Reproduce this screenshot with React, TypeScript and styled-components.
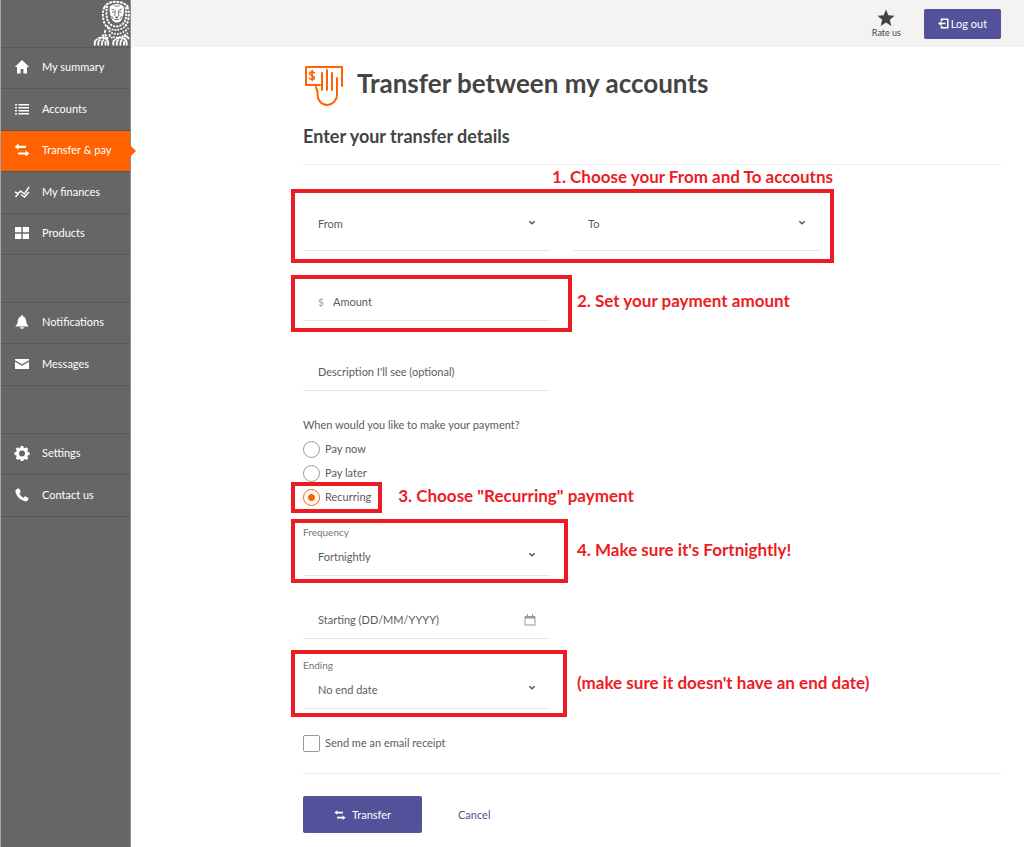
import React from "react";
import styled, { createGlobalStyle } from "styled-components";

const family = `Lato, "Open Sans", sans-serif`;
const orange = "#ff6200";
const indigo = "#525199";
const red = "#ed1c24";

const GlobalStyle = createGlobalStyle`
  *, *::before, *::after { box-sizing: border-box; }
  body {
    margin: 0;
    background: #fff;
    color: #5c5c5c;
    font: 11px/16px ${family};
  }
  button, input, select { font: inherit; color: inherit; }
`;

const Shell = styled.div`
  display: flex;
  min-height: 100vh;
`;

const Sidebar = styled.aside`
  flex: 0 0 131px;
  background: #666;
  border-left: 1px solid #a6a6a6;
  border-right: 1px solid #8f8f8f;
`;

const LogoBar = styled.div`
  height: 48px;
  display: flex;
  justify-content: flex-end;
  align-items: flex-start;
  border-bottom: 1px solid #575757;
`;

const NavGroup = styled.ul`
  list-style: none;
  margin: 0 0 47px;
  padding: 0;
  & + & { border-top: 1px solid #575757; }
`;

const NavItem = styled.li`
  height: 41px;
  border-bottom: 1px solid #575757;
  &:nth-child(even) { height: 42px; }
`;

const NavLink = styled.a<{ $active?: boolean }>`
  position: relative;
  display: flex;
  align-items: center;
  gap: 12px;
  height: 100%;
  padding: 0 0 2px 13px;
  color: #fff;
  text-decoration: none;
  background: ${(p) => (p.$active ? orange : "transparent")};
  &::after {
    content: "";
    display: ${(p) => (p.$active ? "block" : "none")};
    position: absolute;
    left: 100%;
    top: 50%;
    margin-top: -6px;
    border: 6px solid transparent;
    border-left-color: ${orange};
    border-right-width: 0;
  }
`;

const Page = styled.div`
  flex: 1;
  min-width: 0;
`;

const TopBar = styled.header`
  display: flex;
  justify-content: flex-end;
  align-items: center;
  gap: 23px;
  height: 47px;
  padding-right: 23px;
  background: #f3f3f3;
`;

const RateLink = styled.a`
  display: flex;
  flex-direction: column;
  align-items: center;
  color: #444;
  font-size: 9px;
  line-height: 12px;
  text-decoration: none;
`;

const Button = styled.button<{ $size: "small" | "large" }>`
  display: inline-flex;
  align-items: center;
  justify-content: center;
  gap: ${(p) => (p.$size === "large" ? 6 : 2)}px;
  width: ${(p) => (p.$size === "large" ? 119 : 77)}px;
  height: ${(p) => (p.$size === "large" ? 37 : 30)}px;
  padding: 0;
  border: 0;
  border-radius: 2px;
  background: ${indigo};
  color: #fff;
  cursor: pointer;
`;

const Content = styled.main`
  padding: 16px 23px 14px 172px;
`;

const TitleRow = styled.div`
  display: flex;
  align-items: center;
  gap: 14px;
  height: 44px;
`;

const Title = styled.h1`
  margin: 0;
  padding-bottom: 5px;
  color: #444;
  font: 700 26px/32px ${family};
`;

const Subtitle = styled.h2`
  margin: 17px 0 16px;
  color: #444;
  font: 700 18px/24px ${family};
`;

const Rule = styled.hr`
  margin: 0;
  border: 0;
  border-top: 1px solid #ececec;
`;

const FieldPair = styled.div`
  position: relative;
  display: grid;
  grid-template-columns: repeat(2, 247px);
  gap: 23px;
  width: max-content;
  margin: 33px 0 32px;
`;

const FieldSlot = styled.div<{ $gap: number }>`
  position: relative;
  width: 247px;
  margin-bottom: ${(p) => p.$gap}px;
`;

const FieldLabel = styled.label`
  display: block;
  color: #767676;
  font-size: 10px;
  line-height: 12px;
`;

const Line = styled.div<{ $tall?: boolean }>`
  display: flex;
  align-items: center;
  height: ${(p) => (p.$tall ? 53 : 38)}px;
  padding: 0 14px 0 15px;
  border-bottom: 1px solid #e6e6e6;
`;

const Select = styled.select`
  flex: 1;
  min-width: 0;
  padding: 0;
  border: 0;
  background: transparent;
  appearance: none;
  outline: 0;
`;

const TextInput = styled.input`
  flex: 1;
  min-width: 0;
  padding: 0;
  border: 0;
  background: transparent;
  outline: 0;
  &::placeholder { color: #5c5c5c; opacity: 1; }
`;

const Currency = styled.span`
  width: 15px;
  color: #999;
  font-size: 10px;
`;

const Choices = styled.fieldset`
  margin: 0 0 17px;
  padding: 0;
  border: 0;
`;

const Legend = styled.legend`
  padding: 0;
  margin-bottom: 4px;
`;

const Choice = styled.label`
  position: relative;
  display: flex;
  align-items: center;
  gap: 5px;
  width: max-content;
  height: 24px;
`;

const Radio = styled.input`
  appearance: none;
  width: 17px;
  height: 17px;
  margin: 0;
  border: 1px solid #999;
  border-radius: 50%;
  background: #fff;
  &:checked {
    border-color: ${orange};
    background: radial-gradient(circle, ${orange} 3px, #fff 4px);
  }
`;

const Checkbox = styled.input`
  appearance: none;
  width: 17px;
  height: 17px;
  margin: 0;
  border: 1px solid #999;
  border-radius: 2px;
  background: #fff;
`;

const Footer = styled.footer`
  margin-top: 18px;
`;

const Actions = styled.div`
  display: flex;
  align-items: center;
  gap: 36px;
  margin-top: 22px;
`;

const CancelLink = styled.a`
  color: ${indigo};
  text-decoration: none;
`;

const Highlight = styled.div<{ $top: number; $right: number; $bottom: number }>`
  position: absolute;
  top: -${(p) => p.$top}px;
  right: -${(p) => p.$right}px;
  bottom: -${(p) => p.$bottom}px;
  left: -12px;
  border: 4px solid ${red};
  pointer-events: none;
`;

const Note = styled.span<{ $above?: boolean }>`
  position: absolute;
  ${(p) =>
    p.$above
      ? "right: -13px; bottom: 100%; margin-bottom: 9px;"
      : "left: 100%; top: 50%; margin: -13px 0 0 27px;"}
  color: ${red};
  font: 700 17px/24px ${family};
  white-space: nowrap;
`;

const Icon = ({ children, size = 16 }: { children: React.ReactNode; size?: number }) => (
  <svg width={size} height={size} viewBox="0 0 16 16" fill="currentColor" aria-hidden="true">
    {children}
  </svg>
);

const SwapShape = () => (
  <path d="M.5 4.800 4.500 1.800v1.900H12v2.200H4.500v1.900zM15.500 11.500l-4 3v-1.900H4v-2.200h7.500V8.500z" />
);

const icons = {
  home: <path d="M8 1 .8 8H3v6.500h3.600V10h2.800v4.500H13V8h2.200z" />,
  list: <path d="M1 3h2v1.500H1zM4.500 3H15v1.500H4.500zM1 6h2v1.500H1zM4.500 6H15v1.500H4.500zM1 9h2v1.500H1zM4.500 9H15v1.500H4.500zM1 12h2v1.500H1zM4.500 12H15v1.500H4.500z" />,
  swap: <SwapShape />,
  chart: (
    <g fill="none" stroke="currentColor" strokeWidth="1.500">
      <path d="m1.500 13 5-6 4 3 4.500-7" />
      <path d="m1 8 3 1.500M7 10.500l3.500 2.500L15 8" />
    </g>
  ),
  grid: <path d="M1 2h6.300v5.300H1zM8.700 2H15v5.300H8.700zM1 8.700h6.300V14H1zM8.700 8.700H15V14H8.700z" />,
  bell: <path d="M8 1.200c.8 0 1.200.5 1.200 1.200 2 .6 2.800 2.300 3 4.600.2 2.600.8 3.800 2.600 5.500H1.200C3 10.800 3.600 9.600 3.800 7c.2-2.300 1-4 3-4.600 0-.7.400-1.200 1.200-1.200zM6 13.200h4c-.2 1-1 1.600-2 1.600s-1.800-.6-2-1.600z" />,
  mail: <path d="M1 3h14v1.300L8 8.300 1 4.300zM1 5.700l7 4 7-4V13H1z" />,
  gear: (
    <path fillRule="evenodd" d="m6.700 1h2.600l.4 1.800 1.200.5 1.600-1 1.800 1.800-1 1.600.5 1.200 1.800.4v2.600l-1.800.4-.5 1.200 1 1.600-1.800 1.800-1.600-1-1.200.5-.4 1.800H6.700l-.4-1.800-1.200-.5-1.600 1-1.800-1.800 1-1.600-.5-1.200L.5 9.900V7.300l1.700-.4.5-1.200-1-1.600 1.800-1.800 1.600 1 1.200-.5zM8 5.400a3 3 0 1 0 0 6 3 3 0 0 0 0-6z" />
  ),
  phone: <path d="M2.300 2.600 4 1.500c.5-.3 1-.1 1.300.4l1.300 2.300c.2.500.1.900-.3 1.200l-1 .8c.8 2 2.300 3.600 4.300 4.500l.9-1c.3-.4.8-.4 1.200-.2l2.300 1.300c.5.300.6.800.4 1.300l-1 1.600c-.5.7-1.500.8-2.500.5C6 12.900 2.600 9.400 1.500 5c-.2-1 .1-1.900.8-2.400z" />,
};

type IconName = keyof typeof icons;

const ChevronMark = styled.svg`
  margin-bottom: 3px;
`;

const Chevron = () => (
  <ChevronMark width="8" height="6" viewBox="0 0 8 6" fill="none" stroke="#555" strokeWidth="1.500" aria-hidden="true">
    <path d="m1.300 1.200 2.700 2.500 2.700-2.500" />
  </ChevronMark>
);

const CalendarIcon = () => (
  <svg width="12" height="12" viewBox="0 0 12 12" fill="none" stroke="#999" aria-hidden="true">
    <path d="M1 2.500h10v8.500H1z" />
    <path d="M1 3.500h10" strokeWidth="2" />
    <path d="M3.500 0v2M8.500 0v2" />
  </svg>
);

const LionLogo = () => (
  <svg width="37" height="46" viewBox="0 0 37 46" fill="none" stroke="#fff" role="img" aria-label="Lion">
    <path d="M11.500 8C13 0 31 0 35 7" strokeWidth="2" strokeDasharray="2.800 .8" />
    <path d="M11.500 7c-2 4-2 9-1 13 .8 4 2.500 7 6 9M34.500 7c1.500 4 1.500 8 1 12-.5 3-2 6-4 8" strokeWidth="2" strokeDasharray="2.400 1.200" />
    <path d="M14.500 6c-1.500 4-1.500 11 .5 15 2 4 5 5.500 8.500 5.500s6.500-2 8.500-5.500c1.500-3 1.500-10 .5-15" strokeWidth="2" strokeDasharray="2.200 1" />
    <path d="M14 25.500c3 4 6 4.500 9.500 4.500s8-2 10.500-6M16 30.500c3 3 5 3.500 8 3.500s8-2 11.500-6M20 37c4 1.500 10 0 15-4" strokeWidth="1.800" strokeDasharray="1.800 1.200" />
    <path d="M17 6.500c1.500-3.500 12-3.500 13.500 0 1.300 4-.1 10.500-2.800 14.500-2 2-5.500 2-7.700 0C17.300 17 15.800 10.500 17 6.500z" fill="#fff" stroke="none" />
    <g stroke="#666" strokeWidth=".9">
      <path d="m18.500 9 3 1.200M29 9l-3 1.200M19 12h2.500M26 12h2.500M22.300 10.500l-.6 5.500M25.200 10.500l.6 5.500M18.500 16l2 3M29 16l-2 3M21.500 19.500h4.500" />
      <path d="M22.300 17h3l-1.500 1.300z" fill="#666" />
      <path d="M21 5.500c1.500 1 4 1 5.500 0" />
    </g>
    <g strokeWidth="1.800">
      <path d="M12.500 30c-1.500 3 0 6 3 8M16.500 34c0 2 1 3 3 4M9.500 34.500c1 2 3 3.500 5.500 4.500" strokeDasharray="3 1" />
      <path d="M2 45.500c-1-4 1-6 3-6.500M5.500 45.500c-.8-3 .2-5 2-6M9 45.500c-.5-3 .2-5 2-6M12.500 45.500v-4.500M5 38.500c3-1.500 8-1 9.500 2 .8 1.500.8 3.500.5 5" />
      <path d="M20.500 45.500c-1-4 1-6 3-6.500M24 45.500c-.8-3 .2-5 2-6M27.500 45.500c-.5-3 .2-5 2-6M31 45.500v-4.500M23.500 38.500c3-1.500 8-1 9.500 2 .8 1.500.8 3.500.5 5M31 36c2 0 4 1 5 3" />
    </g>
  </svg>
);

const HandCashIcon = () => (
  <svg width="40" height="44" viewBox="0 0 40 44" fill="none" stroke={orange} strokeWidth="2" strokeLinejoin="round" strokeLinecap="round" aria-hidden="true">
    <path d="M17 22H3V4h36v19" />
    <path d="M19 10v17M24 7v20M29 10v17" />
    <path d="M34 15v17c0 5-4.500 10-10 10S14.500 37 14.500 32v-3c0-2-1.500-3-1.500-5" />
    <path d="M11.500 9.800C10 8.600 6.500 8.800 6.800 11c.3 2 4.600 1.400 4.600 3.700 0 2-3.400 2.200-5 .8M9.200 7.500v10" strokeWidth="1.600" />
  </svg>
);

const LogoutIcon = () => (
  <svg width="11" height="11" viewBox="0 0 11 11" aria-hidden="true">
    <path d="M3.500 3V1.200h6.300v8.600H3.500V8" fill="none" stroke="currentColor" strokeWidth="1.500" />
    <path d="M0 5.500 3.500 3v1.700H7.500v1.600H3.500V8z" fill="currentColor" />
  </svg>
);

const navGroups: { label: string; icon: IconName; active?: boolean }[][] = [
  [
    { label: "My summary", icon: "home" },
    { label: "Accounts", icon: "list" },
    { label: "Transfer & pay", icon: "swap", active: true },
    { label: "My finances", icon: "chart" },
    { label: "Products", icon: "grid" },
  ],
  [
    { label: "Notifications", icon: "bell" },
    { label: "Messages", icon: "mail" },
  ],
  [
    { label: "Settings", icon: "gear" },
    { label: "Contact us", icon: "phone" },
  ],
];

const SelectLine = ({ id, option, tall, name }: { id: string; option: string; tall?: boolean; name?: string }) => (
  <Line $tall={tall}>
    <Select id={id} aria-label={name}>
      <option>{option}</option>
    </Select>
    <Chevron />
  </Line>
);

export default function App() {
  return (
    <>
      <GlobalStyle />
      <Shell>
        <Sidebar>
          <LogoBar>
            <LionLogo />
          </LogoBar>
          <nav>
            {navGroups.map((group, i) => (
              <NavGroup key={i}>
                {group.map((item) => (
                  <NavItem key={item.label}>
                    <NavLink href="#" $active={item.active}>
                      <Icon>{icons[item.icon]}</Icon>
                      {item.label}
                    </NavLink>
                  </NavItem>
                ))}
              </NavGroup>
            ))}
          </nav>
        </Sidebar>
        <Page>
          <TopBar>
            <RateLink href="#">
              <Icon size={18}>
                <path d="m8 .5 2.100 5.100 5.500.4-4.200 3.600 1.300 5.400L8 12.100 3.300 15l1.300-5.400L.4 6l5.500-.4z" />
              </Icon>
              Rate us
            </RateLink>
            <Button type="button" $size="small">
              <LogoutIcon />
              Log out
            </Button>
          </TopBar>
          <Content>
            <TitleRow>
              <HandCashIcon />
              <Title>Transfer between my accounts</Title>
            </TitleRow>
            <Subtitle>Enter your transfer details</Subtitle>
            <Rule />
            <form onSubmit={(e) => e.preventDefault()}>
              <FieldPair>
                <SelectLine id="from" name="From" option="From" tall />
                <SelectLine id="to" name="To" option="To" tall />
                <Highlight $top={9} $right={14} $bottom={12} />
                <Note $above>1. Choose your From and To accoutns</Note>
              </FieldPair>
              <FieldSlot $gap={32}>
                <Line>
                  <Currency>$</Currency>
                  <TextInput aria-label="Amount" placeholder="Amount" />
                </Line>
                <Highlight $top={8} $right={22} $bottom={11} />
                <Note>2. Set your payment amount</Note>
              </FieldSlot>
              <FieldSlot $gap={26}>
                <Line>
                  <TextInput aria-label="Description I'll see (optional)" placeholder="Description I'll see (optional)" />
                </Line>
              </FieldSlot>
              <Choices>
                <Legend>When would you like to make your payment?</Legend>
                <Choice>
                  <Radio type="radio" name="when" />
                  Pay now
                </Choice>
                <Choice>
                  <Radio type="radio" name="when" />
                  Pay later
                </Choice>
                <Choice>
                  <Radio type="radio" name="when" defaultChecked />
                  Recurring
                  <Highlight $top={3} $right={11} $bottom={4} />
                  <Note>3. Choose "Recurring" payment</Note>
                </Choice>
              </Choices>
              <FieldSlot $gap={25}>
                <FieldLabel htmlFor="frequency">Frequency</FieldLabel>
                <SelectLine id="frequency" option="Fortnightly" />
                <Highlight $top={7} $right={18} $bottom={7} />
                <Note>4. Make sure it's Fortnightly!</Note>
              </FieldSlot>
              <FieldSlot $gap={20}>
                <Line>
                  <TextInput aria-label="Starting (DD/MM/YYYY)" placeholder="Starting (DD/MM/YYYY)" />
                  <CalendarIcon />
                </Line>
              </FieldSlot>
              <FieldSlot $gap={22}>
                <FieldLabel htmlFor="ending">Ending</FieldLabel>
                <SelectLine id="ending" option="No end date" />
                <Highlight $top={9} $right={17} $bottom={8} />
                <Note>(make sure it doesn't have an end date)</Note>
              </FieldSlot>
              <Choice>
                <Checkbox type="checkbox" />
                Send me an email receipt
              </Choice>
              <Footer>
                <Rule />
                <Actions>
                  <Button type="submit" $size="large">
                    <Icon size={12}>
                      <SwapShape />
                    </Icon>
                    Transfer
                  </Button>
                  <CancelLink href="#">Cancel</CancelLink>
                </Actions>
              </Footer>
            </form>
          </Content>
        </Page>
      </Shell>
    </>
  );
}
